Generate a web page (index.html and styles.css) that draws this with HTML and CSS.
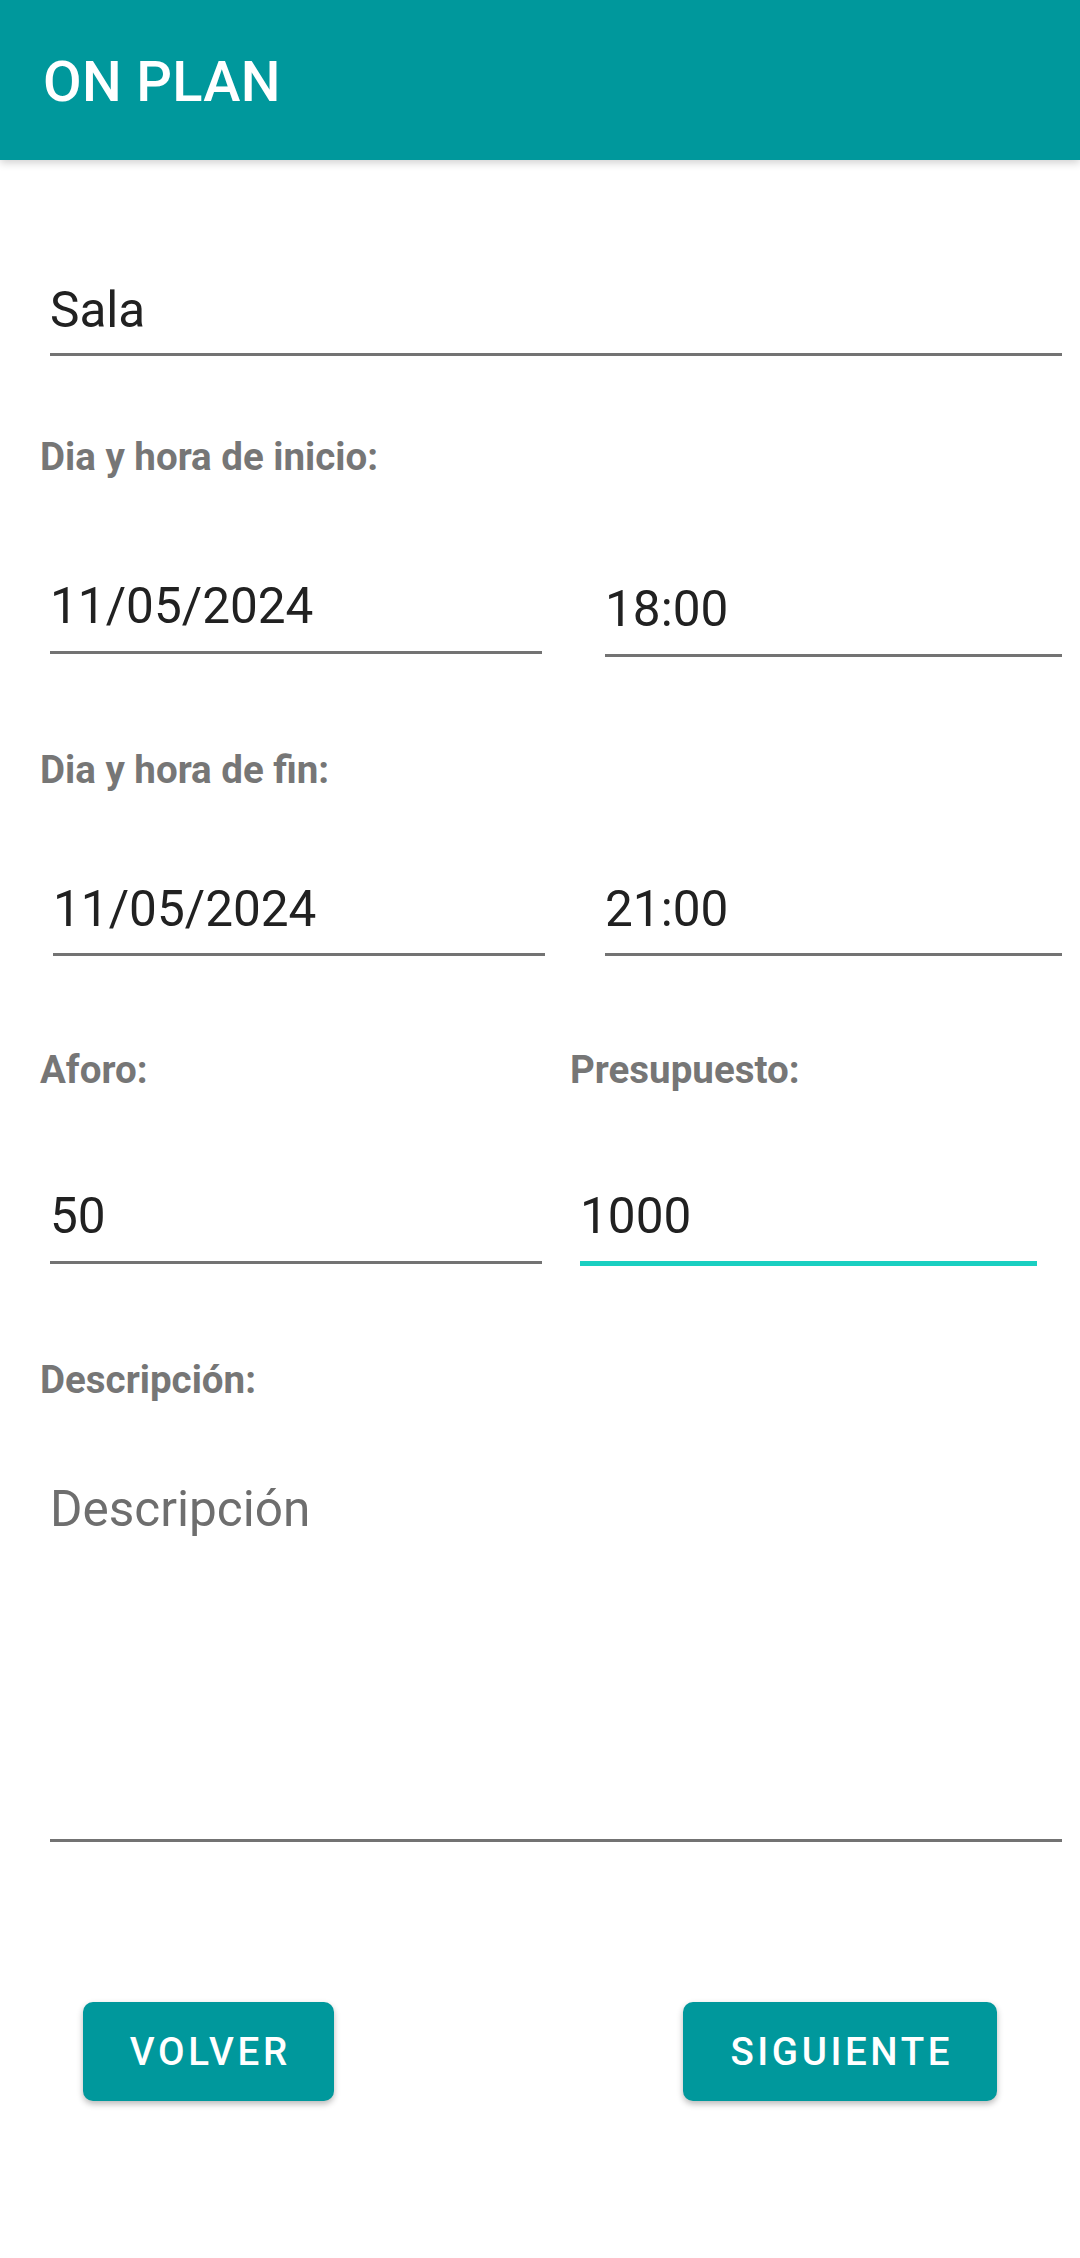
FILE: index.html
```html
<!DOCTYPE html>
<html lang="es">
<head>
<meta charset="utf-8">
<title>ON PLAN</title>
<link rel="stylesheet" href="styles.css">
</head>
<body>
<header class="appbar">
  <h1 class="title">ON PLAN</h1>
</header>
<main class="form">
  <div class="field field-full sp-sala">Sala</div>

  <p class="label sp-l1">Dia y hora de inicio:</p>
  <div class="row sp-r1">
    <div class="field field-date">11/05/2024</div>
    <div class="field field-time time-low">18:00</div>
  </div>

  <p class="label sp-l2">Dia y hora de fin:</p>
  <div class="row sp-r2">
    <div class="field field-date shift">11/05/2024</div>
    <div class="field field-time shift-time">21:00</div>
  </div>

  <div class="label-row sp-l3">
    <p class="label label-left">Aforo:</p>
    <p class="label">Presupuesto:</p>
  </div>
  <div class="row sp-r3">
    <div class="field field-date">50</div>
    <div class="field field-budget focused">1000</div>
  </div>

  <p class="label sp-l4">Descripción:</p>
  <div class="field field-full field-desc sp-desc"><span class="hint">Descripción</span></div>

  <div class="buttons">
    <button class="btn btn-back">VOLVER</button>
    <button class="btn btn-next">SIGUIENTE</button>
  </div>
</main>
</body>
</html>
```

FILE: styles.css
```css
html, body {
  margin: 0;
  padding: 0;
  background: #ffffff;
}

body {
  width: 1080px;
  height: 2258px;
  overflow: hidden;
  font-family: Roboto, "Noto Sans", "Liberation Sans", sans-serif;
}

.appbar {
  height: 160px;
  box-sizing: border-box;
  padding: 4px 0 0 43px;
  background: #00989c;
  box-shadow: 0 3px 8px rgba(0, 0, 0, 0.18);
  position: relative;
  z-index: 1;
}

.title {
  margin: 0;
  font-size: 56px;
  line-height: 156px;
  font-weight: 500;
  color: #ffffff;
  letter-spacing: 0.3px;
}

.form {
  padding: 0 18px 0 40px;
}

.field {
  box-sizing: border-box;
  font-size: 49.5px;
  line-height: 60px;
  color: #212121;
  border-bottom: 3px solid #737373;
  padding-bottom: 14px;
  white-space: nowrap;
}

.field-full {
  margin-left: 10px;
  width: 1012px;
}

.row {
  display: flex;
  align-items: flex-start;
}

.field-date {
  margin-left: 10px;
  width: 492px;
}

.field-time {
  margin-left: 63px;
  width: 457px;
}

.field-budget {
  margin-left: 38px;
  width: 457px;
}

.time-low {
  margin-top: 3px;
}

.shift {
  margin-left: 13px;
}

.shift-time {
  margin-left: 60px;
}

.focused {
  border-bottom: 5px solid #1acfc1;
}

.label {
  margin: 0;
  font-size: 38.5px;
  line-height: 46px;
  font-weight: 700;
  color: #767676;
}

.label-row {
  display: flex;
}

.label-left {
  width: 530px;
}

.hint {
  color: #6e6e6e;
}

/* vertical rhythm */
.sp-sala { margin-top: 120px; padding-bottom: 13px; }
.sp-l1 { margin-top: 78px; }
.sp-r1 { margin-top: 96px; }
.sp-r1 .field { padding-bottom: 15px; }
.sp-l2 { margin-top: 90px; }
.sp-r2 { margin-top: 86px; }
.sp-l3 { margin-top: 91px; }
.sp-r3 { margin-top: 93px; }
.sp-r3 .field { padding-bottom: 15px; }
.sp-l4 { margin-top: 91px; }
.sp-desc { margin-top: 76px; padding-bottom: 300px; }

.buttons {
  display: flex;
  justify-content: space-between;
  margin: 160px 65px 0 43px;
}

.btn {
  height: 99px;
  border: none;
  border-radius: 10px;
  background: #00989c;
  color: #ffffff;
  font-family: Roboto, "Noto Sans", "Liberation Sans", sans-serif;
  font-size: 38.5px;
  font-weight: 500;
  letter-spacing: 3.6px;
  padding: 0 0 0 3.6px;
  text-align: center;
  box-shadow: 0 3px 6px rgba(0, 0, 0, 0.28);
}

.btn-back {
  width: 251px;
}

.btn-next {
  width: 314px;
}
```
